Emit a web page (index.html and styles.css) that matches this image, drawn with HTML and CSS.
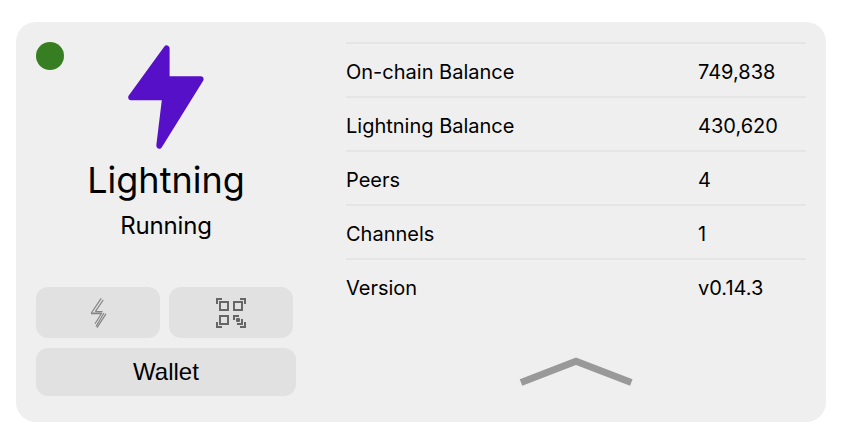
FILE: index.html
```html
<!DOCTYPE html>
<html lang="en">
<head>
<meta charset="utf-8">
<title>Lightning</title>
<link rel="stylesheet" href="styles.css">
</head>
<body>
<main class="card">
  <section class="service">
    <span class="status"></span>
    <svg class="logo" width="80" height="110" viewBox="126 40 80 110"><path d="M166.6 48.4V79.2H200.6L159.3 145.6L165.2 97.2H131.2Z"/></svg>
    <h1 class="name">Lightning</h1>
    <p class="state">Running</p>
    <div class="actions">
      <button class="btn" aria-label="Connect">
        <svg width="20" height="34" viewBox="88 296 20 34" class="bolt">
          <path d="M101.2 298.3L91.3 313M103.2 300L95.3 311.7"/>
          <path class="bar" d="M91 313.4H101.5"/>
          <path d="M95.5 311.7H102.5M101.8 313L95 323.8M104 313L96 326.5M106 313.8L97 327.6"/>
        </svg>
      </button>
      <button class="btn" aria-label="QR code">
        <svg width="30" height="30" viewBox="0 0 30 30" class="qr">
          <path d="M1 6V1H6M24 1H29V6M1 24V29H6M24 29H29V24"/>
          <path d="M4 4H12V12H4ZM18 4H26V12H18ZM4 18H12V26H4Z"/>
          <path d="M18 22V18H23M21 26H26V21"/>
          <rect x="20" y="20" width="4" height="4" rx="1"/>
        </svg>
      </button>
    </div>
    <button class="btn wallet">Wallet</button>
  </section>
  <section class="details">
    <dl class="stats">
      <div class="row"><dt>On-chain Balance</dt><dd>749,838</dd></div>
      <div class="row"><dt>Lightning Balance</dt><dd>430,620</dd></div>
      <div class="row"><dt>Peers</dt><dd>4</dd></div>
      <div class="row"><dt>Channels</dt><dd>1</dd></div>
      <div class="row"><dt>Version</dt><dd>v0.14.3</dd></div>
    </dl>
    <svg class="chevron" width="116" height="32" viewBox="518 355 116 32"><path d="M521 382.5L576 361.2L631.3 382.5"/></svg>
  </section>
</main>
</body>
</html>
```
FILE: styles.css
```css
* { box-sizing: border-box; }
body {
  margin: 0;
  padding: 22px 20px 22px 16px;
  background: #fff;
  color: #000;
  font-family: Inter, sans-serif;
}
.card {
  display: flex;
  gap: 50px;
  height: 400px;
  padding: 20px;
  border-radius: 20px;
  background: #efefef;
}
.service {
  position: relative;
  display: flex;
  flex-direction: column;
  align-items: center;
  width: 260px;
}
.status {
  position: absolute;
  top: 0;
  left: 0;
  width: 28px;
  height: 28px;
  border-radius: 50%;
  background: #377e22;
}
.logo {
  margin-top: -2px;
  fill: #5610c8;
  stroke: #5610c8;
  stroke-width: 6;
  stroke-linejoin: round;
}
.name {
  margin: 8px 0 0;
  font-size: 36px;
  font-weight: 400;
  line-height: 44px;
}
.state {
  margin: 9px 0 0;
  font-size: 24px;
  line-height: 30px;
  letter-spacing: -0.15px;
}
.actions {
  display: flex;
  gap: 9px;
  align-self: flex-start;
  margin-top: 46px;
}
.btn {
  display: flex;
  align-items: center;
  justify-content: center;
  width: 124px;
  height: 51px;
  padding: 0;
  border: 0;
  border-radius: 12px;
  background: #e1e1e1;
  color: #000;
}
.wallet {
  width: 260px;
  height: 48px;
  margin-top: 10px;
  font: 24px "Liberation Sans", sans-serif;
}
.bolt {
  fill: none;
  stroke: #858585;
  stroke-width: 1.2;
}
.bar { stroke-width: 1.8; }
.qr {
  fill: none;
  stroke: #666;
  stroke-width: 2;
}
.qr rect { fill: #666; stroke: none; }
.details {
  display: flex;
  flex-direction: column;
  align-items: center;
  width: 460px;
}
.stats { width: 100%; margin: 0; }
.row {
  display: flex;
  height: 54px;
  padding-top: 14px;
  border-top: 2px solid #e5e5e5;
  font-size: 20px;
  line-height: 28px;
}
.row dt { width: 352px; }
.row dd { margin: 0; }
.chevron {
  margin-top: 43px;
  fill: none;
  stroke: #999;
  stroke-width: 7;
}
```
